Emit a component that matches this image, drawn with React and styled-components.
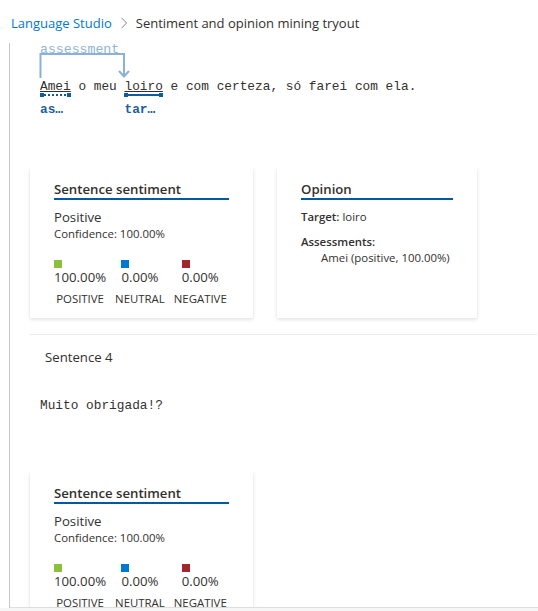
import React from "react";
import styled, { createGlobalStyle } from "styled-components";

const UI = `"Open Sans", "Noto Sans", "Liberation Sans", sans-serif`;
const MONO = `"Liberation Mono", "DejaVu Sans Mono", monospace`;

const GlobalStyle = createGlobalStyle`
  html, body { margin: 0; padding: 0; background: #ffffff; overflow: hidden; }
  body { font-family: ${UI}; color: #323130; }
  * { box-sizing: border-box; }
`;

const Page = styled.div`
  width: 538px;
  height: 611px;
  display: flex;
  flex-direction: column;
  overflow: hidden;
`;

const Breadcrumb = styled.nav`
  height: 43px;
  flex: none;
  display: flex;
  align-items: center;
  gap: 8px;
  padding: 3px 0 0 11px;
  font-size: 13px;
  white-space: nowrap;
`;

const Crumb = styled.span`
  color: ${(p) => (p.$link ? "#0078d4" : "#323130")};
`;

const Chevron = styled.svg`
  width: 8px;
  height: 12px;
  flex: none;
`;

const Panel = styled.main`
  height: 565px;
  flex: none;
  margin-left: 9px;
  border-left: 1px solid #c8c6c4;
  border-bottom: 1px solid #dedede;
  padding-left: 20px;
  overflow: hidden;
`;

const Footer = styled.div`
  flex: 1;
  background: #f6f6f6;
`;

const SentenceBlock = styled.div`
  margin-left: 10px;
  font-family: ${MONO};
  font-size: 12.8px;
  color: #323130;
`;

const ArcArea = styled.div`
  position: relative;
  height: ${(p) => p.$h}px;
`;

const RelationLabel = styled.span`
  position: absolute;
  left: 0;
  top: 0;
  font-family: ${MONO};
  font-size: 13.2px;
  line-height: 14px;
  color: #8fb3da;
`;

const ArcSvg = styled.svg`
  position: absolute;
  left: -1px;
  top: 0;
  overflow: visible;
`;

const TextRow = styled.div`
  display: flex;
  align-items: flex-start;
  white-space: pre;
`;

const Token = styled.div`
  display: flex;
  flex-direction: column;
`;

const Word = styled.span`
  line-height: 14px;
  text-decoration: ${(p) => (p.$marked ? "underline" : "none")};
  text-underline-offset: 1px;
`;

const Marker = styled.span`
  position: relative;
  display: block;
  height: 4px;
  margin: 0 1px;
  border-top: 2px ${(p) => (p.$dotted ? "dotted" : "solid")} #0f5ca3;
  &::before,
  &::after {
    content: "";
    position: absolute;
    top: -3px;
    width: 4px;
    height: 4px;
    background: #0f5ca3;
  }
  &::before { left: -1px; }
  &::after { right: -1px; }
`;

const TokenLabel = styled.span`
  margin-top: 4px;
  line-height: 16px;
  font-weight: 700;
  color: #1d5e9f;
`;

const CardRow = styled.div`
  display: flex;
  gap: 24px;
  margin-top: ${(p) => p.$mt}px;
`;

const Card = styled.section`
  width: ${(p) => p.$w}px;
  flex: none;
  background: #ffffff;
  padding: 13px 24px 11px 24px;
  box-shadow: 0 1.6px 3.6px rgba(0, 0, 0, 0.13), 0 0.3px 0.9px rgba(0, 0, 0, 0.11);
`;

const CardTitle = styled.h3`
  margin: 0;
  font-size: 13.2px;
  font-weight: 600;
  line-height: 18px;
  color: #323130;
  border-bottom: 2px solid #005a9e;
`;

const Sentiment = styled.div`
  margin-top: 8px;
  font-size: 13.2px;
  line-height: 18px;
`;

const Confidence = styled.div`
  font-size: 11.4px;
  line-height: 16px;
`;

const Scores = styled.div`
  display: flex;
  gap: 9px;
  margin-top: 18px;
`;

const ScoreCol = styled.div`
  display: flex;
  flex-direction: column;
  align-items: center;
`;

const ScoreValue = styled.div`
  display: flex;
  flex-direction: column;
  align-items: flex-start;
`;

const Swatch = styled.span`
  width: 8px;
  height: 8px;
  background: ${(p) => p.$color};
`;

const Pct = styled.span`
  font-size: 13.2px;
  line-height: 18px;
`;

const ScoreLabel = styled.span`
  margin-top: 5px;
  font-size: 11.4px;
  line-height: 16px;
`;

const Field = styled.div`
  margin-top: ${(p) => p.$mt}px;
  font-size: 11.4px;
  line-height: ${(p) => p.$lh || 16}px;
  padding-left: ${(p) => p.$indent || 0}px;
`;

const Strong = styled.span`
  font-weight: 600;
`;

const Divider = styled.hr`
  margin: 16px 1px 0 0;
  border: none;
  border-top: 1px solid #edebe9;
`;

const SentenceHeading = styled.div`
  margin-top: 12px;
  padding-left: 15px;
  font-size: 13.2px;
  line-height: 20px;
`;

const PlainText = styled.div`
  margin-top: ${(p) => p.$mt}px;
  margin-left: 10px;
  font-family: ${MONO};
  font-size: 12.8px;
  line-height: 16px;
  color: #323130;
`;

function SentimentCard({ label }) {
  const scores = [
    { color: "#8dbf3e", pct: "100.00%", name: "POSITIVE" },
    { color: "#0078d4", pct: "0.00%", name: "NEUTRAL" },
    { color: "#a4262c", pct: "0.00%", name: "NEGATIVE" },
  ];
  return (
    <Card $w={223}>
      <CardTitle>Sentence sentiment</CardTitle>
      <Sentiment>{label}</Sentiment>
      <Confidence>Confidence: 100.00%</Confidence>
      <Scores>
        {scores.map((s) => (
          <ScoreCol key={s.name}>
            <ScoreValue>
              <Swatch $color={s.color} />
              <Pct>{s.pct}</Pct>
            </ScoreValue>
            <ScoreLabel>{s.name}</ScoreLabel>
          </ScoreCol>
        ))}
      </Scores>
    </Card>
  );
}

function OpinionCard() {
  return (
    <Card $w={200}>
      <CardTitle>Opinion</CardTitle>
      <Field $mt={9}>
        <Strong>Target:</Strong> loiro
      </Field>
      <Field $mt={9} $lh={15}>
        <Strong>Assessments:</Strong>
      </Field>
      <Field $mt={1} $lh={15} $indent={20}>
        Amei (positive, 100.00%)
      </Field>
    </Card>
  );
}

export default function App() {
  const arc = "#8ab1da";
  return (
    <Page>
      <GlobalStyle />
      <Breadcrumb>
        <Crumb $link>Language Studio</Crumb>
        <Chevron viewBox="0 0 8 12">
          <path d="M1.5 0.8 L6.5 6 L1.5 11.2" fill="none" stroke="#8a8886" strokeWidth="1" />
        </Chevron>
        <Crumb>Sentiment and opinion mining tryout</Crumb>
      </Breadcrumb>
      <Panel>
        <SentenceBlock>
          <ArcArea $h={37}>
            <RelationLabel>assessment</RelationLabel>
            <ArcSvg width="100" height="36" viewBox="0 0 100 36">
              <path
                d="M1.5 35 V11 H85 V33"
                fill="none"
                stroke={arc}
                strokeWidth="2"
              />
              <path d="M80 28 L85 33.5 L90 28" fill="none" stroke={arc} strokeWidth="2" />
            </ArcSvg>
          </ArcArea>
          <TextRow>
            <Token>
              <Word $marked>Amei</Word>
              <Marker $dotted />
              <TokenLabel>as…</TokenLabel>
            </Token>
            <Token>
              <Word> o meu </Word>
            </Token>
            <Token>
              <Word $marked>loiro</Word>
              <Marker />
              <TokenLabel>tar…</TokenLabel>
            </Token>
            <Token>
              <Word> e com certeza, só farei com ela.</Word>
            </Token>
          </TextRow>
        </SentenceBlock>
        <CardRow $mt={49}>
          <SentimentCard label="Positive" />
          <OpinionCard />
        </CardRow>
        <Divider />
        <SentenceHeading>Sentence 4</SentenceHeading>
        <PlainText $mt={31}>Muito obrigada!?</PlainText>
        <CardRow $mt={57}>
          <SentimentCard label="Positive" />
        </CardRow>
      </Panel>
      <Footer />
    </Page>
  );
}
